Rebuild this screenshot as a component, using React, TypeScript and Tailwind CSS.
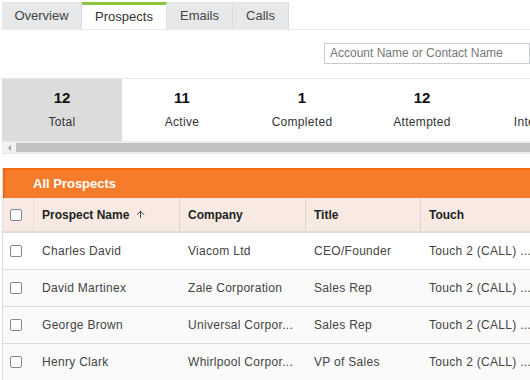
import { ArrowUp } from "lucide-react";

const tabs = [
  { label: "Overview", w: "w-[80px]" },
  { label: "Prospects", w: "w-[85px]" },
  { label: "Emails", w: "w-[66px]" },
  { label: "Calls", w: "w-[56px]" },
];

const stats = [
  { value: "12", label: "Total" },
  { value: "11", label: "Active" },
  { value: "1", label: "Completed" },
  { value: "12", label: "Attempted" },
  { value: "3", label: "Interested" },
];

const rows = [
  { name: "Charles David", company: "Viacom Ltd", title: "CEO/Founder", touch: "Touch 2 (CALL) ..." },
  { name: "David Martinex", company: "Zale Corporation", title: "Sales Rep", touch: "Touch 2 (CALL) ..." },
  { name: "George Brown", company: "Universal Corpor...", title: "Sales Rep", touch: "Touch 2 (CALL) ..." },
  { name: "Henry Clark", company: "Whirlpool Corpor...", title: "VP of Sales", touch: "Touch 2 (CALL) ..." },
];

function Checkbox() {
  return <div className="w-[12px] h-[12px] rounded-[2px] border border-[#7d8a99] bg-white" />;
}

export default function App() {
  return (
    <div className="w-[530px] h-[380px] overflow-hidden bg-white font-['Liberation_Sans',Arial,sans-serif] text-[#333]">
      {/* Tabs */}
      <div className="flex pl-[2px] pt-[2px] border-b border-[#e8ebef]">
        {tabs.map((t) => (
          <div
            key={t.label}
            className={
              t.label === "Prospects"
                ? `${t.w} h-[27px] flex items-center justify-center text-[13px] text-[#333] bg-white border-t-[3px] border-[#8cc63e] border-r border-r-[#dfe2e6]`
                : `${t.w} h-[27px] flex items-center justify-center text-[13px] text-[#444] bg-[#e6e8ea] border-r border-[#d8dbdf] border-t border-t-[#e0e2e5]`
            }
          >
            {t.label}
          </div>
        ))}
      </div>

      {/* Search */}
      <div className="h-[49px] flex items-center justify-end border-b border-[#e4e8ee] pl-[2px]">
        <div className="w-[206px] h-[21px] border border-[#c9ccd0] flex items-center px-[5px] text-[12px] text-[#777] mb-[2px]">
          Account Name or Contact Name
        </div>
      </div>

      {/* Stats */}
      <div className="ml-[2px]">
        <div className="flex h-[62px] overflow-hidden">
          {stats.map((s, i) => (
            <div
              key={s.label}
              className={`w-[120px] shrink-0 flex flex-col items-center pt-[10px] ${i === 0 ? "bg-[#dcdcdc]" : "bg-white"}`}
            >
              <span className="text-[15px] font-bold text-[#111] leading-[18px]">{s.value}</span>
              <span className="text-[12px] text-[#333] mt-[6px] tracking-[0.3px]">{s.label}</span>
            </div>
          ))}
        </div>
        <div className="h-[13px] flex items-center bg-[#f1f1f1] border-y border-[#e6e6e6]">
          <div className="w-[14px] flex items-center justify-center">
            <div className="w-0 h-0 border-y-[3px] border-y-transparent border-r-[3px] border-r-[#a3a3a3]" />
          </div>
          <div className="flex-1 h-[9px] bg-[#c1c1c1]" />
        </div>
      </div>

      {/* Table */}
      <div className="mt-[14px] ml-[2px] border-l border-[#dedede]">
        <div className="h-[30px] bg-[#f67c2c] border-t-2 border-[#f26b13] border-l-2 border-l-[#e96a17] flex items-center pl-[28px] text-[13px] font-bold text-white">
          All Prospects
        </div>
        <div className="flex h-[35px] bg-[#f8eae2] border-b-2 border-[#e2dcd8] text-[12px] font-bold text-[#222]">
          <div className="w-[31px] shrink-0 flex items-center pl-[7px] border-r border-[#ecdcd2]">
            <Checkbox />
          </div>
          <div className="w-[146px] shrink-0 flex items-center pl-[8px] border-r border-[#e3d3c8]">
            Prospect Name
            <ArrowUp className="w-[11px] h-[11px] ml-[6px] text-[#333]" strokeWidth={2} />
          </div>
          <div className="w-[126px] shrink-0 flex items-center pl-[8px] border-r border-[#e3d3c8]">Company</div>
          <div className="w-[115px] shrink-0 flex items-center pl-[8px] border-r border-[#e3d3c8]">Title</div>
          <div className="flex-1 flex items-center pl-[8px]">Touch</div>
        </div>
        {rows.map((r, i) => (
          <div
            key={r.name}
            className={`flex h-[37px] border-b border-[#dcdcdc] text-[12px] text-[#444] tracking-[0.3px] ${i === 0 ? "bg-white" : "bg-[#fafafa]"}`}
          >
            <div className="w-[31px] shrink-0 flex items-center pl-[7px]">
              <Checkbox />
            </div>
            <div className="w-[146px] shrink-0 flex items-center pl-[8px]">{r.name}</div>
            <div className="w-[126px] shrink-0 flex items-center pl-[8px]">{r.company}</div>
            <div className="w-[115px] shrink-0 flex items-center pl-[8px]">{r.title}</div>
            <div className="flex-1 flex items-center pl-[8px] whitespace-nowrap">{r.touch}</div>
          </div>
        ))}
      </div>
    </div>
  );
}
